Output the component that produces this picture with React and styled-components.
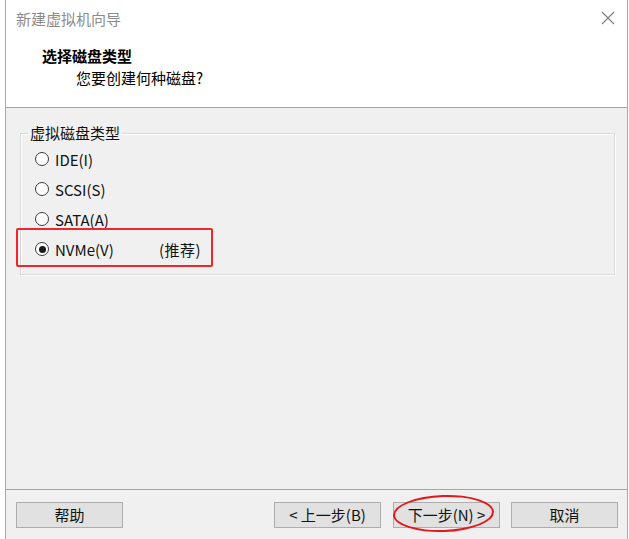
import styled, { createGlobalStyle } from "styled-components";

const GlobalStyle = createGlobalStyle`
  html, body {
    margin: 0;
    padding: 0;
    background: #ffffff;
  }
  body {
    font-family: "Noto Sans CJK SC", "Microsoft YaHei", sans-serif;
    color: #1a1a1a;
  }
`;

const Page = styled.div`
  width: 629px;
  height: 539px;
  background: #ffffff;
  overflow: hidden;
`;

const Window = styled.div`
  margin-left: 5px;
  width: 621px;
  height: 539px;
  border-left: 1px solid #a9a9a9;
  border-right: 1px solid #a9a9a9;
  display: flex;
  flex-direction: column;
`;

const Header = styled.header`
  height: 107px;
  background: #ffffff;
  border-bottom: 1px solid #a5a5a5;
  display: flex;
  flex-direction: column;
`;

const TitleBar = styled.div`
  height: 36px;
  display: flex;
  align-items: center;
  justify-content: space-between;
  padding: 0 12px 0 10px;
`;

const WindowTitle = styled.span`
  font-size: 15px;
  color: #8c8c8c;
`;

const CloseButton = styled.button`
  border: none;
  background: none;
  padding: 0;
  width: 14px;
  height: 14px;
  display: flex;
`;

const Heading = styled.h1`
  margin: 10px 0 0 36px;
  font-size: 15px;
  line-height: 20px;
  font-weight: 700;
  color: #000;
`;

const SubHeading = styled.p`
  margin: 2px 0 0 70px;
  font-size: 15px;
  line-height: 20px;
  color: #000;
`;

const Body = styled.main`
  flex: 1;
  background: #f0f0f0;
  padding: 16px 12px 0 14px;
`;

const Group = styled.fieldset`
  margin: 0;
  padding: 2px 0 10px 0;
  border: 1px solid #d9d9d9;
  box-shadow: inset 1px 1px 0 #ffffff, 1px 1px 0 #ffffff;
  border-radius: 0;
`;

const Legend = styled.legend`
  margin-left: 7px;
  padding: 0 2px;
  font-size: 15px;
  line-height: 18px;
  color: #111;
`;

const OptionRow = styled.label`
  position: relative;
  display: flex;
  align-items: center;
  height: 30px;
  padding-left: 14px;
  font-size: 15px;
  color: #111;
`;

const RadioCircle = styled.span`
  box-sizing: border-box;
  width: 14px;
  height: 14px;
  border: 1px solid #3a3a3a;
  border-radius: 50%;
  background: #fff;
  display: flex;
  align-items: center;
  justify-content: center;
  margin-right: 6px;
  flex-shrink: 0;

  &::after {
    content: "";
    width: 7px;
    height: 7px;
    border-radius: 50%;
    background: ${(p) => (p.$checked ? "#1a1a1a" : "transparent")};
  }
`;

const OptionText = styled.span`
  width: 104px;
`;

const Hint = styled.span`
  letter-spacing: 0.5px;
`;

const Highlight = styled.span`
  position: absolute;
  left: -5px;
  top: -6px;
  width: 193px;
  height: 35px;
  border: 2px solid #f1262b;
  border-radius: 2px;
  pointer-events: none;
`;

const Footer = styled.footer`
  height: 49px;
  border-top: 1px solid #a5a5a5;
  background: #f0f0f0;
  display: flex;
  align-items: center;
  padding: 0 9px 0 10px;
`;

const Button = styled.button`
  position: relative;
  width: 107px;
  height: 26px;
  margin-left: ${(p) => p.$gap || 0}px;
  background: #e1e1e1;
  border: 1px solid #adadad;
  border-radius: 0;
  font-family: inherit;
  font-size: 15px;
  color: #111;
  padding: 0;
  display: flex;
  align-items: center;
  justify-content: center;
`;

const Spacer = styled.div`
  flex: 1;
`;

const Ring = styled.span`
  position: absolute;
  left: -1px;
  top: -8px;
  width: 97px;
  height: 33px;
  border: 2px solid #e4171c;
  border-radius: 50%;
  transform: rotate(-2deg);
  pointer-events: none;
`;

const options = [
  { label: "IDE(I)" },
  { label: "SCSI(S)" },
  { label: "SATA(A)" },
  { label: "NVMe(V)", hint: "(推荐)", checked: true },
];

export default function App() {
  return (
    <Page>
      <GlobalStyle />
      <Window>
        <Header>
          <TitleBar>
            <WindowTitle>新建虚拟机向导</WindowTitle>
            <CloseButton>
              <svg width="14" height="14" viewBox="0 0 14 14">
                <path d="M1 1 L13 13 M13 1 L1 13" stroke="#7a7a7a" strokeWidth="1.1" fill="none" />
              </svg>
            </CloseButton>
          </TitleBar>
          <Heading>选择磁盘类型</Heading>
          <SubHeading>您要创建何种磁盘?</SubHeading>
        </Header>
        <Body>
          <Group>
            <Legend>虚拟磁盘类型</Legend>
            {options.map((o) => (
              <OptionRow key={o.label}>
                <RadioCircle $checked={o.checked} />
                <OptionText>{o.label}</OptionText>
                {o.hint && <Hint>{o.hint}</Hint>}
                {o.checked && <Highlight />}
              </OptionRow>
            ))}
          </Group>
        </Body>
        <Footer>
          <Button>帮助</Button>
          <Spacer />
          <Button>&lt; 上一步(B)</Button>
          <Button $gap={12}>
            下一步(N) &gt;
            <Ring />
          </Button>
          <Button $gap={11}>取消</Button>
        </Footer>
      </Window>
    </Page>
  );
}
